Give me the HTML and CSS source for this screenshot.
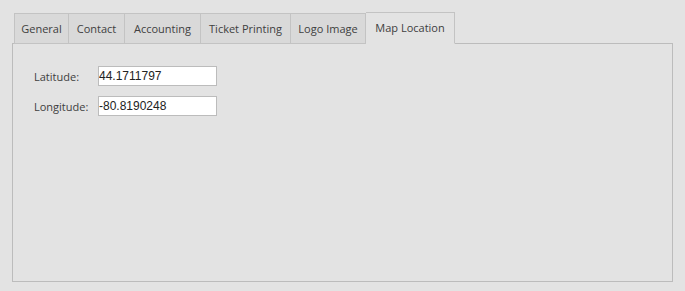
FILE: index.html
```html
<!DOCTYPE html>
<html>
<head>
    <link rel="stylesheet" href="styles.css">
</head>
<body>
    <div class="tabs">
        <div class="tab tab-general">General</div>
        <div class="tab tab-contact">Contact</div>
        <div class="tab tab-accounting">Accounting</div>
        <div class="tab tab-ticket">Ticket Printing</div>
        <div class="tab tab-logo">Logo Image</div>
        <div class="tab tab-map active">Map Location</div>
    </div>
    <div class="panel">
        <div class="row">
            <label for="lat">Latitude:</label>
            <input id="lat" type="text" value="44.1711797">
        </div>
        <div class="row">
            <label for="lng">Longitude:</label>
            <input id="lng" type="text" value="-80.8190248">
        </div>
    </div>
</body>
</html>
```

FILE: styles.css
```css
body {
    margin: 0;
    padding: 12px 12px 9px 12px;
    background: #e3e3e3;
    font-family: "Open Sans", sans-serif;
    font-size: 11px;
    color: #404040;
    height: 291px;
    width: 685px;
    box-sizing: border-box;
    display: flex;
    flex-direction: column;
}

.tabs {
    display: flex;
    align-items: flex-end;
    padding-left: 2px;
    height: 32px;
    margin-bottom: -1px;
    position: relative;
    z-index: 1;
}

.tab {
    height: 31px;
    box-sizing: border-box;
    border: 1px solid #c3c3c3;
    border-right-width: 0;
    background: #d9d9d9;
    line-height: 30px;
    text-align: center;
}

.tab-general { width: 54px; }
.tab-contact { width: 56px; }
.tab-accounting { width: 76px; }
.tab-ticket { width: 90px; }
.tab-logo { width: 76px; border-right-width: 1px; }
.tab-map { width: 89px; }

.tab.active {
    height: 32px;
    background: #e3e3e3;
    border-left-width: 0;
    border-right-width: 1px;
    border-bottom-color: #e3e3e3;
    line-height: 30px;
}

.panel {
    flex: 1;
    border: 1px solid #bcbcbc;
    padding: 22px 0 0 21px;
}

.row {
    display: flex;
    align-items: center;
    margin-bottom: 10px;
}

.row label {
    width: 64px;
    padding-top: 1px;
}

.row input {
    width: 119px;
    height: 20px;
    box-sizing: border-box;
    border: 1px solid #bcbcbc;
    background: #fff;
    font-family: "Liberation Sans", sans-serif;
    font-size: 12px;
    color: #222;
    padding: 0;
    margin: 0;
    outline: none;
}
```
